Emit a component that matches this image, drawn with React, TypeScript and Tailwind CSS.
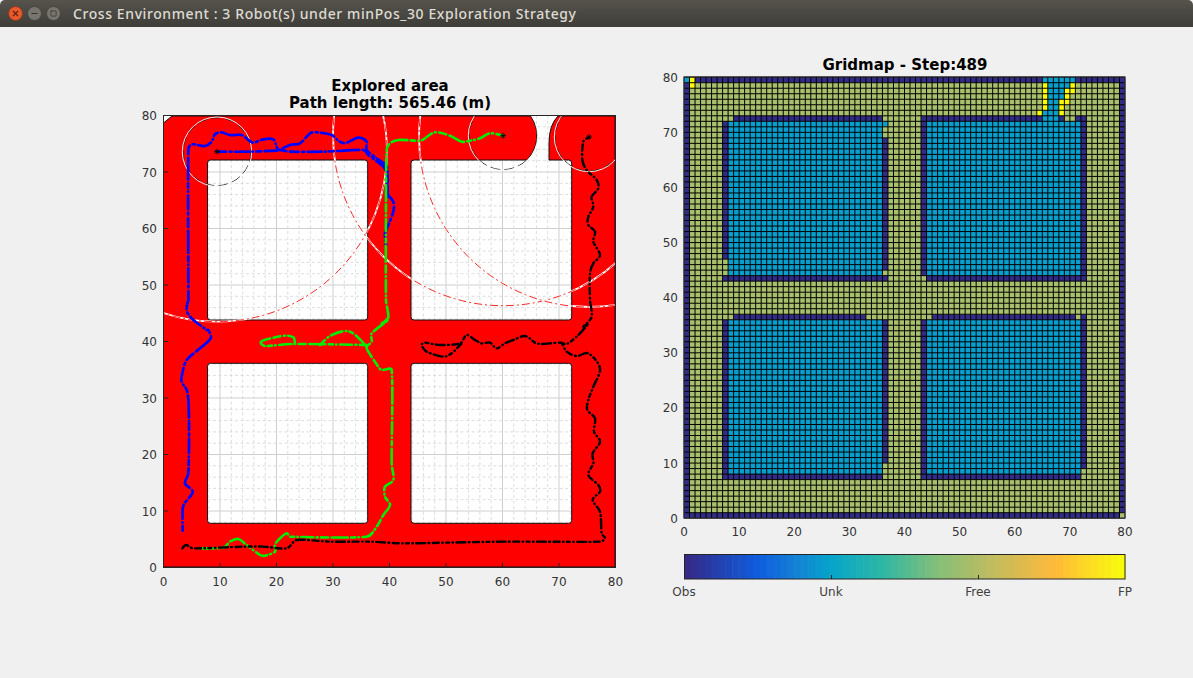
import { X, Minus, Square } from "lucide-react";

// ---------- left plot data, traced from the picture ----------
type Pt = [number, number];

const TICKS = [0, 10, 20, 30, 40, 50, 60, 70, 80];

// the traces are in 3x crop coordinates, this puts them back on the page
const crop = (ox: number, oy: number, pts: Pt[]): Pt[] => pts.map(([x, y]) => [ox + x / 3, oy + y / 3]);

// catmull-rom through the traced points, handles kept short so long runs stay straight
const smooth = (pts: Pt[]) => {
  let d = `M${pts[0][0]} ${pts[0][1]}`;
  const handle = (a: Pt, b: Pt, seg: number): Pt => {
    const hx = (b[0] - a[0]) / 6;
    const hy = (b[1] - a[1]) / 6;
    const k = Math.min(1, seg / 3 / (Math.hypot(hx, hy) || 1));
    return [hx * k, hy * k];
  };
  for (let i = 0; i < pts.length - 1; i++) {
    const p0 = pts[i - 1] ?? pts[i];
    const p1 = pts[i];
    const p2 = pts[i + 1];
    const p3 = pts[i + 2] ?? p2;
    const seg = Math.hypot(p2[0] - p1[0], p2[1] - p1[1]);
    const h1 = handle(p0, p2, seg);
    const h2 = handle(p1, p3, seg);
    d += ` C${p1[0] + h1[0]} ${p1[1] + h1[1]} ${p2[0] - h2[0]} ${p2[1] - h2[1]} ${p2[0]} ${p2[1]}`;
  }
  return d;
};

const bluePaths: Pt[][] = [
  crop(150, 100, [[202, 155], [300, 155], [380, 152], [390, 150], [420, 155], [520, 155], [640, 150], [655, 165], [700, 200], [712, 225], [712, 290]]),
  crop(150, 100, [[115, 600], [115, 150], [125, 133], [165, 138], [185, 125], [195, 103], [215, 97], [240, 105], [275, 105], [295, 120], [310, 128], [340, 118], [370, 118], [380, 140], [385, 150], [420, 135], [450, 130], [480, 100], [500, 97], [545, 105], [565, 122], [585, 130], [625, 113], [650, 125], [650, 150], [680, 175], [710, 200], [712, 240], [712, 280], [730, 305], [730, 335], [715, 375], [705, 400], [708, 435]]),
  [
    ...crop(150, 100, [[115, 600], [110, 630], [125, 655], [170, 690]]),
    ...crop(150, 320, [[175, 30], [182, 55], [150, 85], [110, 120], [97, 160], [95, 185], [112, 215], [117, 300], [115, 460], [105, 490], [128, 515], [105, 548], [98, 565], [98, 632]]),
  ],
];

const greenPaths: Pt[][] = [
  [
    ...crop(370, 100, [[400, 107], [360, 100], [330, 115], [300, 122], [275, 125], [240, 107], [195, 97], [165, 115], [150, 122], [85, 120], [60, 130], [50, 150], [48, 300], [48, 600], [55, 652], [35, 670]]),
    ...crop(150, 320, [[715, 0], [665, 40], [665, 65], [650, 80], [655, 95], [685, 140], [695, 150], [725, 150], [725, 430], [730, 480], [705, 500], [705, 530], [720, 555], [700, 585], [680, 620], [650, 650], [420, 650], [410, 640], [385, 660], [375, 675], [375, 695], [345, 707], [330, 705], [290, 675], [265, 657], [240, 665], [220, 683], [145, 685]]),
  ],
  crop(150, 320, [[650, 75], [430, 72], [345, 78], [332, 68], [350, 58], [405, 47], [430, 52], [435, 70]]),
  crop(150, 320, [[510, 75], [545, 45], [600, 35], [650, 80]]),
];

const blackPaths: Pt[][] = [
  [
    ...crop(370, 100, [[657, 112], [640, 125], [637, 180], [650, 210], [680, 240], [685, 265], [665, 290], [670, 320], [655, 350], [655, 375], [675, 395], [670, 425], [690, 465], [670, 490], [660, 520], [660, 600], [665, 650], [640, 680]]),
    ...crop(370, 320, [[655, 10], [625, 45], [590, 72], [570, 68], [510, 72], [495, 68], [465, 48], [430, 60], [405, 70], [380, 85], [360, 68], [335, 70], [315, 60], [290, 45], [270, 70], [210, 75], [165, 68], [155, 75], [170, 95], [220, 110], [245, 100], [275, 70]]),
  ],
  [
    ...crop(370, 320, [[575, 68], [590, 95], [620, 108], [655, 100], [690, 145], [670, 200], [655, 240], [652, 270], [675, 295], [672, 335], [690, 365], [668, 400], [670, 430], [655, 465], [685, 495], [690, 515], [668, 540], [690, 575], [695, 640], [705, 655], [690, 665], [400, 665], [100, 670], [0, 665]]),
    ...crop(150, 320, [[540, 665], [440, 660], [410, 685], [340, 680], [280, 680], [130, 685], [108, 675], [97, 685]]),
  ],
];

const robots: Pt[] = [[217, 151.7], [503, 135.7], [589, 137]];

const roomPath = (x0: number, y0: number, x1: number, y1: number) =>
  `M${x0 + 3} ${y0} H${x1 - 3} Q${x1} ${y0} ${x1} ${y0 + 3} V${y1 - 3} Q${x1} ${y1} ${x1 - 3} ${y1} H${x0 + 3} Q${x0} ${y1} ${x0} ${y1 - 3} V${y0 + 3} Q${x0} ${y0} ${x0 + 3} ${y0} Z`;

const redArea =
  "M163.5 123 L172 116 H530.7 A34 34 0 0 1 526.8 160 H414 Q411 160 411 163 V317 Q411 320 414 320 H568.7 Q571.7 320 571.7 317 V163 Q571.7 160 568.7 160 H549 V143 Q549 125 558 116 H615 V567 H163.5 Z " +
  roomPath(207.5, 160, 367.7, 320) +
  " " +
  roomPath(207.5, 363.3, 367.7, 523.3) +
  " " +
  roomPath(411, 363.3, 571.7, 523.3);

const px = (v: number) => 163.5 + v * 5.65;
const py = (v: number) => 567.5 - v * 5.65;

function ExploredPlot() {
  const minor = Array.from({ length: 41 }, (_, i) => i * 2).filter((v) => v % 10 !== 0);
  return (
    <svg width={500} height={480} viewBox="140 112 500 480" className="overflow-visible">
      <defs>
        <clipPath id="axes">
          <rect x={163.5} y={115.5} width={452} height={452} />
        </clipPath>
      </defs>
      <rect x={163.5} y={115.5} width={452} height={452} fill="#fff" />
      {minor.map((v) => (
        <g key={v} stroke="#d4d4d4" strokeWidth={0.8} strokeDasharray="3 2.5">
          <line x1={px(v)} x2={px(v)} y1={115.5} y2={567.5} />
          <line y1={py(v)} y2={py(v)} x1={163.5} x2={615.5} />
        </g>
      ))}
      {TICKS.map((v) => (
        <g key={v} stroke="#cfcfcf" strokeWidth={1}>
          <line x1={px(v)} x2={px(v)} y1={115.5} y2={567.5} />
          <line y1={py(v)} y2={py(v)} x1={163.5} x2={615.5} />
        </g>
      ))}
      <path d={redArea} fill="#ff0000" fillRule="evenodd" stroke="#111" strokeWidth={1} />
      <g clipPath="url(#axes)" fill="none">
        {robots.map(([cx, cy]) => (
          <g key={cx}>
            <circle cx={cx} cy={cy} r={170} stroke="#fff" strokeWidth={1.8} />
            <circle cx={cx} cy={cy} r={170} stroke="#f01010" strokeWidth={0.9} strokeDasharray="8 3 2 3" />
            <circle cx={cx} cy={cy} r={34} stroke="#222" strokeWidth={1} strokeDasharray="10 4" />
            <circle cx={cx} cy={cy} r={34.7} stroke="#fff" strokeWidth={0.9} />
          </g>
        ))}
        {bluePaths.map((p, i) => (
          <path key={i} d={smooth(p)} stroke="#0000ff" strokeWidth={2.7} strokeLinecap="round" strokeLinejoin="round" strokeDasharray="9 3.5 2 3.2 14 3.5 0.5 3.2 5 3.4 22 3.5" />
        ))}
        {greenPaths.map((p, i) => (
          <path key={i} d={smooth(p)} stroke="#00ee00" strokeWidth={2.6} strokeLinecap="round" strokeLinejoin="round" strokeDasharray="7 3.5 1 3.2 12 3.5 0.5 3.2 4 3.4 16 3.5" />
        ))}
        {blackPaths.map((p, i) => (
          <path key={i} d={smooth(p)} stroke="#000" strokeWidth={2.4} strokeLinecap="round" strokeLinejoin="round" strokeDasharray="3 3.4 0.5 3.4 6 3.4 1 3.2 9 3.4 0.5 3.4" />
        ))}
        {robots.map(([cx, cy]) => (
          <path key={cx} d={`M${cx - 3} ${cy} H${cx + 3} M${cx} ${cy - 3} V${cy + 3} M${cx - 2} ${cy - 2} L${cx + 2} ${cy + 2} M${cx - 2} ${cy + 2} L${cx + 2} ${cy - 2}`} stroke="#000" strokeWidth={0.9} />
        ))}
      </g>
      <rect x={163.5} y={115.5} width={452} height={452} fill="none" stroke="#262626" strokeWidth={1} />
      {TICKS.map((v) => (
        <g key={v}>
          <path d={`M${px(v)} 567.5 v-4.5 M163.5 ${py(v)} h4.5`} stroke="#262626" strokeWidth={1} />
          <text x={px(v)} y={585.5} textAnchor="middle" className="fill-[#333333] font-['DejaVu_Sans',sans-serif] text-[12px]">
            {v}
          </text>
          <text x={157} y={py(v) + 4.5} textAnchor="end" className="fill-[#333333] font-['DejaVu_Sans',sans-serif] text-[12px]">
            {v}
          </text>
        </g>
      ))}
    </svg>
  );
}

// ---------- grid map ----------
type Kind = "O" | "U" | "F" | "Y";

const buildGrid = () => {
  const grid: Kind[][] = Array.from({ length: 80 }, () => Array<Kind>(80).fill("F"));
  const fill = (c0: number, c1: number, r0: number, r1: number, k: Kind) => {
    for (let c = c0; c <= c1; c++) for (let r = r0; r <= r1; r++) grid[c][r] = k;
  };
  // outer wall
  fill(0, 0, 0, 79, "O");
  fill(79, 79, 0, 79, "O");
  fill(0, 79, 0, 0, "O");
  fill(0, 79, 79, 79, "O");
  fill(79, 79, 0, 0, "F");
  fill(0, 0, 79, 79, "U");
  fill(1, 1, 78, 79, "Y");
  fill(65, 70, 79, 79, "U");
  // upper left room
  fill(8, 35, 44, 71, "U");
  fill(9, 35, 72, 72, "O");
  fill(7, 7, 47, 71, "O");
  fill(7, 36, 43, 43, "O");
  fill(36, 36, 45, 68, "O");
  fill(36, 36, 71, 71, "U");
  // lower left room
  fill(8, 35, 8, 35, "U");
  fill(9, 32, 36, 36, "O");
  fill(7, 7, 7, 35, "O");
  fill(7, 35, 7, 7, "O");
  fill(36, 36, 10, 35, "O");
  // lower right room
  fill(44, 71, 8, 35, "U");
  fill(45, 70, 36, 36, "O");
  fill(43, 43, 7, 35, "O");
  fill(43, 71, 7, 7, "O");
  fill(72, 72, 9, 36, "O");
  // upper right room
  fill(44, 71, 44, 71, "U");
  fill(43, 43, 44, 72, "O");
  fill(44, 72, 43, 43, "O");
  fill(72, 72, 44, 72, "O");
  fill(43, 64, 72, 72, "O");
  fill(65, 67, 72, 72, "U");
  fill(68, 68, 72, 72, "O");
  fill(71, 71, 72, 72, "O");
  // unknown channel through the top wall, with its false positives
  fill(66, 67, 73, 78, "U");
  fill(65, 65, 73, 73, "U");
  fill(68, 68, 76, 78, "U");
  fill(69, 69, 78, 78, "U");
  fill(65, 65, 74, 78, "Y");
  fill(64, 64, 73, 73, "Y");
  fill(69, 69, 75, 77, "Y");
  fill(70, 70, 77, 78, "Y");
  fill(68, 68, 73, 75, "Y");
  return grid;
};

const KIND_COLOR: Record<Kind, string> = { O: "#332b88", U: "#069fce", F: "#a8bf6c", Y: "#fdfd00" };
const CELL = 5.5125;
const gx = (c: number) => 684 + c * CELL;
const gy = (r: number) => 518.2 - r * CELL;

function GridPlot() {
  const grid = buildGrid();
  const paths: Record<Kind, string> = { O: "", U: "", F: "", Y: "" };
  grid.forEach((col, c) =>
    col.forEach((k, r) => {
      paths[k] += `M${gx(c)} ${gy(r + 1)}H${gx(c + 1)}V${gy(r)}H${gx(c)}Z`;
    })
  );
  let lines = "";
  for (let i = 0; i <= 80; i++) lines += `M${gx(i)} ${gy(0)}V${gy(80)}M${gx(0)} ${gy(i)}H${gx(80)}`;
  return (
    <svg width={500} height={470} viewBox="655 74 500 470" className="overflow-visible">
      {(Object.keys(paths) as Kind[]).map((k) => (
        <path key={k} d={paths[k]} fill={KIND_COLOR[k]} />
      ))}
      <path d={lines} stroke="#000" strokeWidth={1} fill="none" />
      <rect x={684} y={76.7} width={441} height={441.5} fill="none" stroke="#444" strokeWidth={1} />
      {TICKS.map((v) => (
        <g key={v}>
          <text x={gx(v)} y={536} textAnchor="middle" className="fill-[#333333] font-['DejaVu_Sans',sans-serif] text-[12px]">
            {v}
          </text>
          <text x={678} y={gy(v) + 4.5} textAnchor="end" className="fill-[#333333] font-['DejaVu_Sans',sans-serif] text-[12px]">
            {v}
          </text>
        </g>
      ))}
    </svg>
  );
}

// ---------- colorbar ----------
const STOPS: [number, number[]][] = [
  [0, [0x35, 0x2a, 0x87]],
  [0.16, [0x0f, 0x5c, 0xdd]],
  [0.25, [0x14, 0x81, 0xd6]],
  [0.33, [0x06, 0xa4, 0xca]],
  [0.45, [0x2e, 0xb7, 0xa4]],
  [0.58, [0x87, 0xbf, 0x77]],
  [0.7, [0xbf, 0xbc, 0x60]],
  [0.85, [0xff, 0xba, 0x39]],
  [1, [0xf9, 0xfb, 0x0e]],
];

const barColor = (t: number) => {
  let i = 0;
  while (i < STOPS.length - 2 && t > STOPS[i + 1][0]) i++;
  const [a, ca] = STOPS[i];
  const [b, cb] = STOPS[i + 1];
  const f = (t - a) / (b - a);
  return `rgb(${ca.map((v, j) => Math.round(v + (cb[j] - v) * f)).join(",")})`;
};

function Colorbar() {
  const w = 441 / 64;
  return (
    <svg width={500} height={34} viewBox="655 550 500 34">
      {Array.from({ length: 64 }, (_, i) => (
        <rect key={i} x={684 + i * w} y={554.5} width={w + 0.6} height={24.5} fill={barColor(i / 63)} />
      ))}
      <rect x={684.5} y={554.5} width={440.5} height={24.5} fill="none" stroke="#262626" strokeWidth={1} />
      <path d="M831.5 579 v-4 M978.5 579 v-4" stroke="#262626" strokeWidth={1} />
    </svg>
  );
}

export default function App() {
  return (
    <div className="flex h-[678px] w-[1193px] flex-col overflow-hidden bg-[#f0f0f0] font-['DejaVu_Sans',sans-serif]">
      <div className="flex h-[27px] shrink-0 items-center rounded-t-[5px] bg-linear-to-b from-[#55534c] to-[#3e3d38] pl-2">
        <div className="flex h-[15px] w-[15px] items-center justify-center rounded-full border border-[#8a3a1c] bg-[#e9592c] text-[#5a2410]">
          <X size={9} strokeWidth={3} />
        </div>
        <div className="ml-1 flex h-[15px] w-[15px] items-center justify-center rounded-full border border-[#45443f] bg-[#77756d] text-[#36352f]">
          <Minus size={9} strokeWidth={3} />
        </div>
        <div className="ml-1 flex h-[15px] w-[15px] items-center justify-center rounded-full border border-[#45443f] bg-[#77756d] text-[#36352f]">
          <Square size={7} strokeWidth={2.5} />
        </div>
        <span className="ml-[12px] font-['Noto_Sans',sans-serif] text-[14px] font-medium tracking-[0.59px] text-[#dfdbd2]">
          Cross Environment : 3 Robot(s) under minPos_30 Exploration Strategy
        </span>
      </div>

      <div className="flex flex-1 pl-[140px]">
        <div className="w-[500px] pt-[51px]">
          <div className="text-center text-[15px] leading-[17px] font-bold text-black">
            <div>Explored area</div>
            <div>Path length: 565.46 (m)</div>
          </div>
          <ExploredPlot />
        </div>

        <div className="ml-[15px] w-[500px] pt-[30px]">
          <div className="text-center text-[15px] leading-[17px] font-bold text-black">Gridmap - Step:489</div>
          <GridPlot />
          <div className="mt-[6px]">
            <Colorbar />
          </div>
          <div className="ml-[-44.5px] flex text-[12px] leading-[16px] text-[#404040]">
            {["Obs", "Unk", "Free", "FP"].map((l) => (
              <div key={l} className="w-[147px] shrink-0 text-center">
                {l}
              </div>
            ))}
          </div>
        </div>
      </div>
    </div>
  );
}
